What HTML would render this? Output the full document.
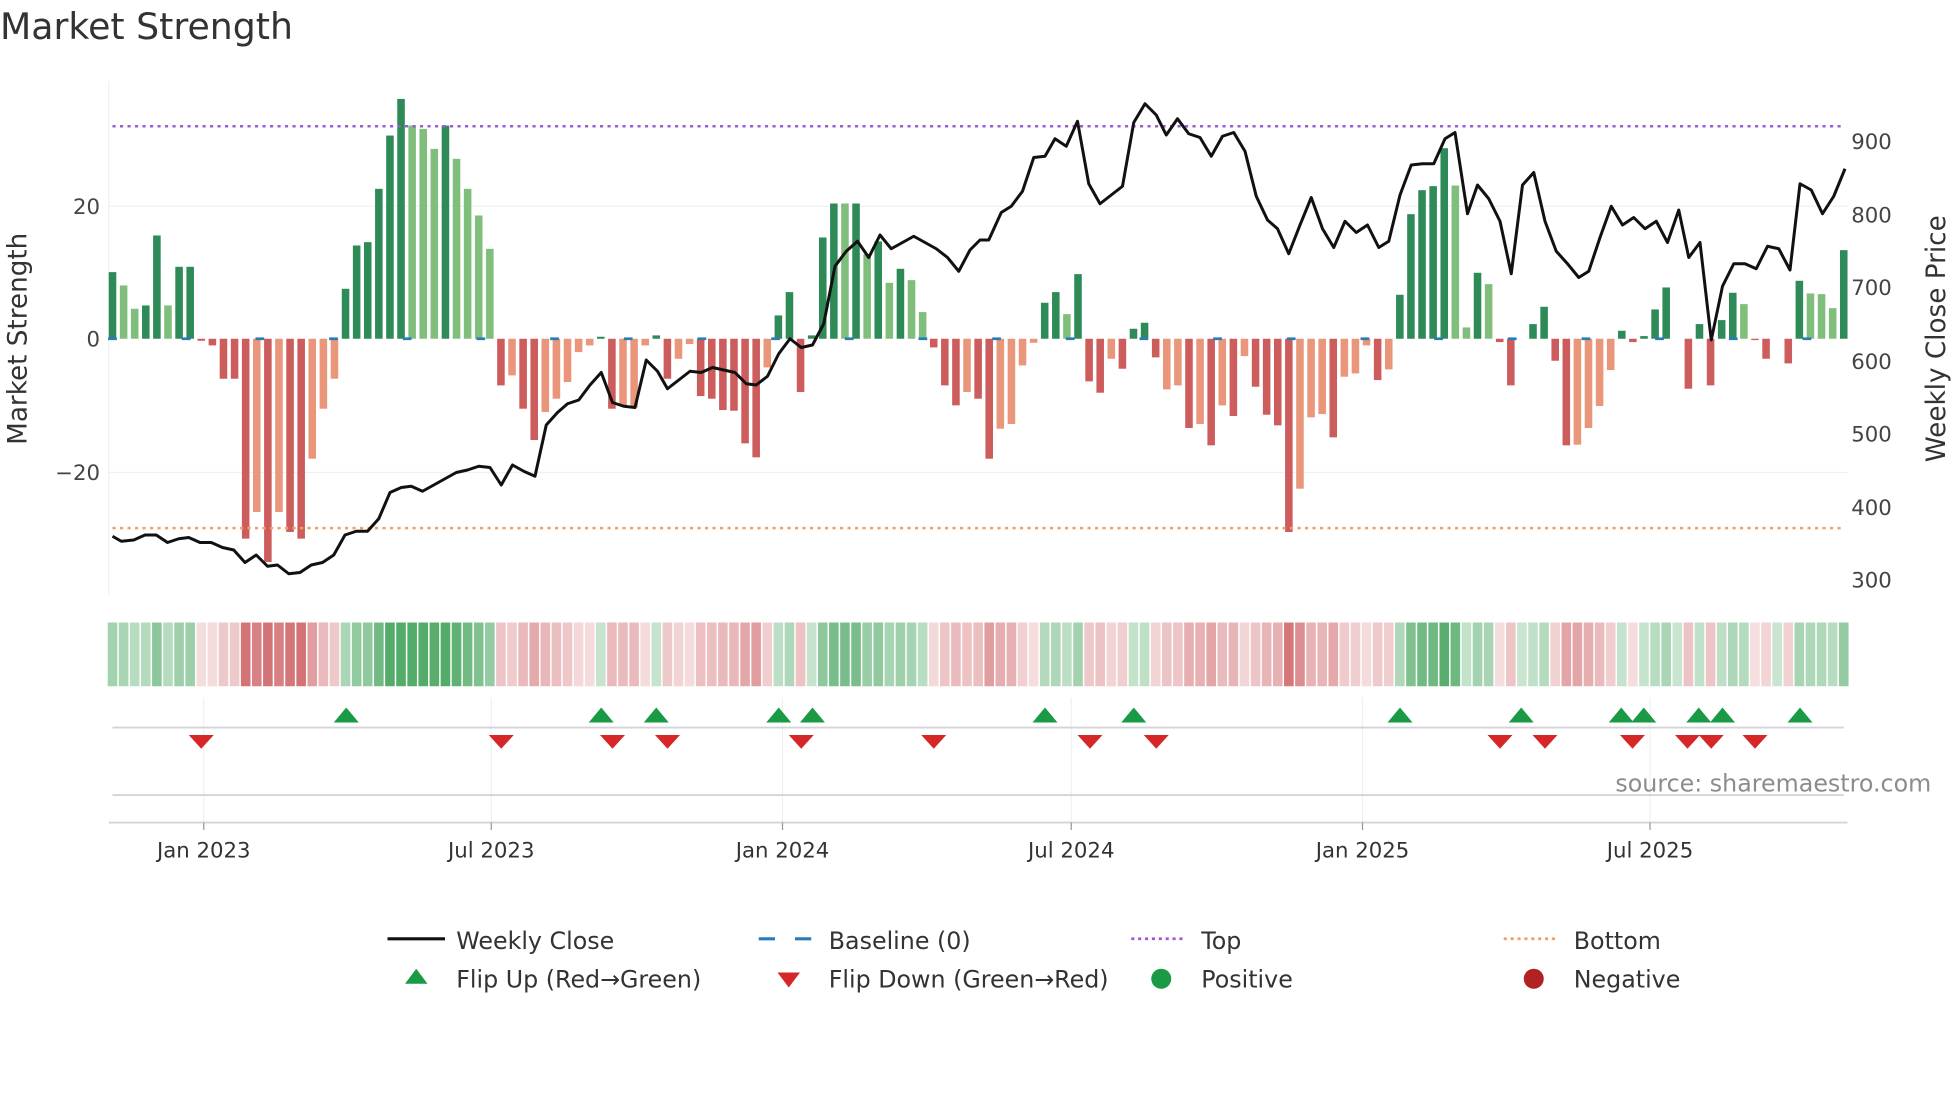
<!DOCTYPE html>
<html><head><meta charset="utf-8"><style>
html,body{margin:0;padding:0;background:#fff;width:1960px;height:1102px;overflow:hidden}
svg{display:block}
text{font-family:"DejaVu Sans","Liberation Sans",sans-serif}
</style></head><body>
<svg id="s" width="1960" height="1102" viewBox="0 0 1568 881.6" xmlns="http://www.w3.org/2000/svg" fill="#333">
<text x="0" y="31" font-size="29" fill="#333">Market Strength</text>
<g stroke="#eef0f5" stroke-width="1">
<line x1="87" y1="165" x2="1478" y2="165"/><line x1="87" y1="378" x2="1478" y2="378"/>
<line x1="87" y1="65" x2="87" y2="476"/>
</g>
<g font-size="17" fill="#444" text-anchor="end">
<text x="80" y="171">20</text><text x="80" y="277">0</text><text x="80" y="384">−20</text>
</g>
<g font-size="17" fill="#444" text-anchor="start">
<text x="1481" y="119">900</text><text x="1481" y="178">800</text><text x="1481" y="236">700</text><text x="1481" y="295">600</text><text x="1481" y="353">500</text><text x="1481" y="412">400</text><text x="1481" y="470">300</text>
</g>
<text transform="translate(21,271) rotate(-90)" font-size="21" text-anchor="middle" fill="#333">Market Strength</text>
<text transform="translate(1556,271) rotate(-90)" font-size="21" text-anchor="middle" fill="#333">Weekly Close Price</text>
<g id="bars"></g>
<line x1="90" y1="101" x2="1476" y2="101" stroke="#9b5bd4" stroke-width="2" stroke-dasharray="2.5,3.5"/>
<line x1="90" y1="422.5" x2="1476" y2="422.5" stroke="#f0a060" stroke-width="2" stroke-dasharray="2.5,3.5"/>
<polyline id="price" fill="none" stroke="#111" stroke-width="2.4" stroke-linejoin="round"/>
<g id="heat"></g>
<g stroke="#eef0f5" stroke-width="1">
<line x1="163" y1="558" x2="163" y2="660"/><line x1="393" y1="558" x2="393" y2="660"/><line x1="626" y1="558" x2="626" y2="660"/><line x1="857" y1="558" x2="857" y2="660"/><line x1="1090" y1="558" x2="1090" y2="660"/><line x1="1320" y1="558" x2="1320" y2="660"/>
</g>
<line x1="90" y1="582" x2="1475" y2="582" stroke="#d4d4d8" stroke-width="1.5"/>
<line x1="90" y1="636" x2="1475" y2="636" stroke="#d4d4d8" stroke-width="1.5"/>
<line x1="87" y1="658" x2="1478" y2="658" stroke="#d4d4d8" stroke-width="1.5"/>
<g stroke="#999" stroke-width="1"><line x1="163" y1="658" x2="163" y2="664"/><line x1="393" y1="658" x2="393" y2="664"/><line x1="626" y1="658" x2="626" y2="664"/><line x1="857" y1="658" x2="857" y2="664"/><line x1="1090" y1="658" x2="1090" y2="664"/><line x1="1320" y1="658" x2="1320" y2="664"/></g>
<g id="flips"></g>
<text x="1545" y="633" font-size="19" fill="#8c8c8c" text-anchor="end">source: sharemaestro.com</text>
<g font-size="17" fill="#333" text-anchor="middle">
<text x="163" y="686">Jan 2023</text><text x="393" y="686">Jul 2023</text><text x="626" y="686">Jan 2024</text><text x="857" y="686">Jul 2024</text><text x="1090" y="686">Jan 2025</text><text x="1320" y="686">Jul 2025</text>
</g>
<g font-size="19" fill="#333">
<line x1="310" y1="751" x2="356" y2="751" stroke="#111" stroke-width="2.5"/>
<text x="365" y="759">Weekly Close</text>
<line x1="607" y1="751" x2="620" y2="751" stroke="#2b7bb9" stroke-width="2.5"/><line x1="636" y1="751" x2="649" y2="751" stroke="#2b7bb9" stroke-width="2.5"/>
<text x="663" y="759">Baseline (0)</text>
<line x1="905" y1="751" x2="948" y2="751" stroke="#9b5bd4" stroke-width="2.2" stroke-dasharray="2.5,3"/>
<text x="961" y="759">Top</text>
<line x1="1203" y1="751" x2="1246" y2="751" stroke="#f0a060" stroke-width="2.2" stroke-dasharray="2.5,3"/>
<text x="1259" y="759">Bottom</text>
<polygon points="324,787 342,787 333,775" fill="#1a9a44"/>
<text x="365" y="790">Flip Up (Red→Green)</text>
<polygon points="622,778 640,778 631,790" fill="#d62728"/>
<text x="663" y="790">Flip Down (Green→Red)</text>
<circle cx="929" cy="783" r="8" fill="#1a9a44"/>
<text x="961" y="790">Positive</text>
<circle cx="1227" cy="783" r="8" fill="#b22222"/>
<text x="1259" y="790">Negative</text>
</g>
</svg>
<script>
var D='D',L='L',R='R',l='l';
var data=[[10,D],[8,L],[4.5,L],[5,D],[15.5,D],[5,L],[10.8,D],[10.8,D],[-0.3,R],[-1,R],[-6,R],[-6,R],[-30,R],[-26,l],[-33.5,R],[-26,l],[-29,R],[-30,R],[-18,l],[-10.5,l],[-6,l],[7.5,D],[14,D],[14.5,D],[22.5,D],[30.5,D],[36,D],[32,L],[31.5,L],[28.5,L],[32,D],[27,L],[22.5,L],[18.5,L],[13.5,L],[-7,R],[-5.5,l],[-10.5,R],[-15.2,R],[-11,l],[-9,l],[-6.5,l],[-2,l],[-1,l],[0.3,D],[-10.5,R],[-10,l],[-10.3,l],[-1,l],[0.5,D],
[-6,R],[-3,l],[-0.8,l],[-8.6,R],[-9,R],[-10.7,R],[-10.8,R],[-15.7,R],[-17.8,R],[-4.3,l],[3.5,D],[7,D],[-8,R],[0.5,D],[15.2,D],[20.3,D],[20.3,L],[20.3,D],[12.7,L],[14.6,D],[8.4,L],[10.5,D],[8.8,L],[4,L],[-1.3,R],[-7,R],[-10,R],[-8,l],[-9,R],
[-18,R],[-13.5,l],[-12.8,l],[-4,l],[-0.6,l],[5.4,D],[7,D],[3.7,L],[9.7,D],[-6.4,R],[-8.1,R],[-3,l],[-4.5,R],[1.5,D],[2.4,D],[-2.8,R],[-7.6,l],[-7,l],[-13.4,R],[-12.8,l],[-16,R],[-10,l],[-11.6,R],[-2.6,l],[-7.2,R],[-11.4,R],[-13,R],[-29,R],[-22.5,l],[-11.8,l],[-11.3,l],[-14.8,R],[-5.7,l],[-5.2,l],[-1,l],[-6.2,R],[-4.6,l],[6.6,D],[18.7,D],[22.3,D],[22.9,D],[28.6,D],[23,L],[1.7,L],[9.9,D],[8.2,L],[-0.5,R],[-7,R],[0,D],[2.2,D],[4.8,D],[-3.3,R],[-16,R],[-15.9,l],[-13.4,l],[-10.1,l],[-4.7,l],[1.2,D],[-0.5,R],[0.4,D],[4.4,D],[7.7,D],[0,D],[-7.5,R],[2.2,D],[-7,R],[2.8,D],[6.9,D],[5.2,L],[-0.2,R],[-3,R],[0,D],[-3.7,R],[8.7,D],[6.8,L],[6.7,L],[4.6,L],[13.3,D]];
var col={D:'#2e8a57',L:'#7fbf7b',R:'#cd5c5c',l:'#e9967a'};
var n=data.length,x0=90,x1=1475,st=(x1-x0)/(n-1),bw=st*0.68,b='',h='',z=271,k=5.33;
for(var i=0;i<n;i++){var v=data[i][0],x=x0+i*st;var y=v>=0?z-v*k:z,hh=Math.abs(v)*k;
if(hh>0.2)b+='<rect x="'+(x-bw/2).toFixed(2)+'" y="'+y.toFixed(2)+'" width="'+bw.toFixed(2)+'" height="'+hh.toFixed(2)+'" fill="'+col[data[i][1]]+'"/>';
var a=Math.min(Math.abs(v)/30,1),c;
if(v>=0){a=0.28+0.6*a;c='rgba(60,160,85,'+a.toFixed(2)+')';}else{a=0.18+0.6*a;c='rgba(200,75,80,'+a.toFixed(2)+')';}
h+='<rect x="'+(x-st/2+0.6).toFixed(2)+'" y="498" width="'+(st-1.2).toFixed(2)+'" height="51" fill="'+c+'"/>';}
for(var j=0;j<24;j++){var xx=x0+j*(x1-x0)/23.5;b+='<line x1="'+(xx-3.5)+'" y1="271" x2="'+(xx+3.5)+'" y2="271" stroke="#2b7bb9" stroke-width="2.2"/>';}
document.getElementById('bars').innerHTML=b;document.getElementById('heat').innerHTML=h;
var p=[[90,429],[97,433],[107,432],[116,428],[125,428],[134,434],[143,431],[151,430],[160,434],[169,434],[178,438],[187,440],[196,450],[205,444],[214,453],[222,452],[231,459],[240,458],[249,452],[258,450],[267,444],[276,428],[285,425],[294,425],[303,415],[312,394],[321,390],[329,389],[338,393],[347,388],[356,383],[365,378],[374,376],[383,373],[392,374],[401,388],[410,372],[419,377],[428,381],[437,340],[446,330],[454,323],[463,320],[472,308],[481,298],[490,322],[499,325],[508,326],[517,288],[526,297],[534,311],[543,304],[552,297],[561,298],[570,294],[579,296],[588,298],[597,307],[605,308],[614,301],[623,283],[632,271],[641,278],[650,276],[659,259],[668,213],[677,201],[686,193],[695,206],[704,188],[713,199],[722,194],[731,189],[740,194],[749,199],[758,206],[767,217],[776,200],[784,192],[791,192],[801,170],[809,165],[818,153],[827,126],[836,125],[844,111],[853,117],[862,97],[871,147],[880,163],[889,156],[898,149],[907,98],[916,83],[925,92],[933,108],[942,95],[951,107],[960,110],[969,125],[978,109],[987,106],[996,121],[1005,157],[1014,176],[1022,183],[1031,203],[1040,180],[1049,158],[1058,183],[1067,198],[1076,177],[1085,186],[1094,180],[1103,198],[1111,193],[1120,156],[1129,132],[1138,131],[1147,131],[1156,111],[1164,106],[1174,171],[1182,148],[1191,159],[1200,177],[1209,219],[1218,148],[1227,138],[1236,177],[1245,201],[1254,211],[1263,222],[1271,217],[1280,190],[1289,165],[1298,180],[1307,174],[1316,183],[1325,177],[1334,194],[1343,168],[1351,206],[1360,194],[1369,272],[1378,229],[1387,211],[1396,211],[1405,215],[1414,197],[1423,199],[1432,216],[1440,147],[1449,152],[1458,171],[1467,157],[1476,135]];
document.getElementById('price').setAttribute('points',p.map(function(q){return q[0]+','+q[1]}).join(' '));
var up=[277,481,525,623,650,836,907,1120,1217,1297,1315,1359,1378,1440],dn=[161,401,490,534,641,747,872,925,1200,1236,1306,1350,1369,1404],f='';
up.forEach(function(x){f+='<polygon points="'+(x-10)+',578 '+(x+10)+',578 '+x+',566" fill="#1a9a44"/>';});
dn.forEach(function(x){f+='<polygon points="'+(x-10)+',588 '+(x+10)+',588 '+x+',599" fill="#d62728"/>';});
document.getElementById('flips').innerHTML=f;
</script>
</body></html>
